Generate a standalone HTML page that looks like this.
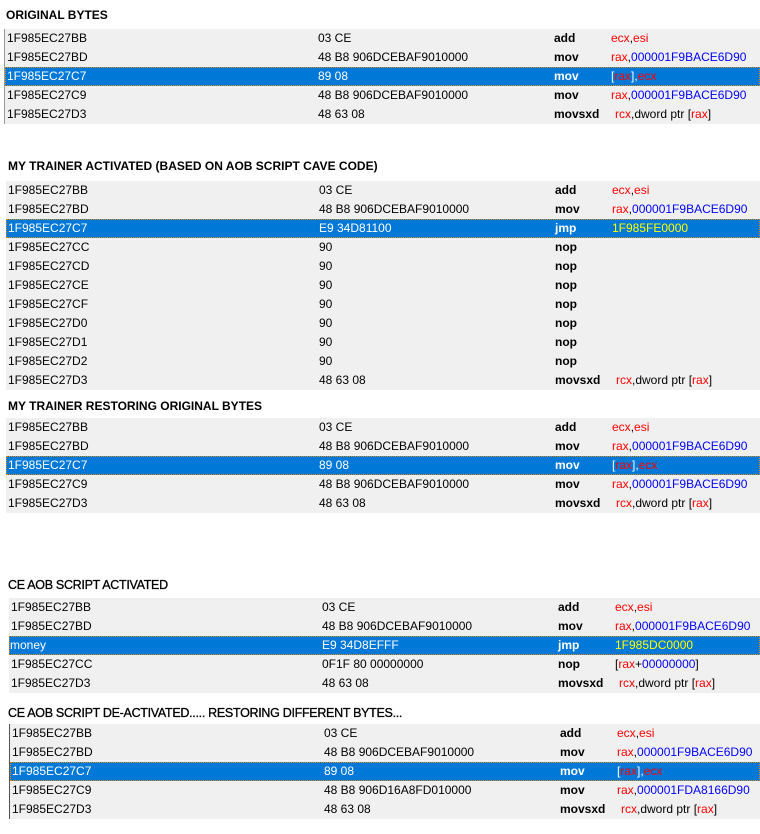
<!DOCTYPE html>
<html><head><meta charset="utf-8">
<style>
body{margin:0;width:760px;height:834px;background:#fff;position:relative;overflow:hidden;font-family:"Liberation Sans",sans-serif;font-size:12px;color:#000}
.t{position:absolute;font-weight:bold;font-size:12px;white-space:nowrap}
.b{position:absolute;right:0;background:#f0f0f0}
.r{height:19px;line-height:19px;position:relative;white-space:nowrap}
.r span.c{position:absolute;top:0}
.r .o{font-weight:bold}
.s{background:#0078d7;color:#fff;outline:1px dotted #e08a00;outline-offset:-1px}
.g{color:#f00}.h{color:#00f}.y{color:#ff0}
.s .p{color:#fff}
</style></head><body>

<div class="t" style="left:6px;top:8px">ORIGINAL BYTES</div>
<div class="b" style="left:4px;top:29px;border-left:1px solid #999">
<div class="r"><span class="c" style="left:2px">1F985EC27BB</span><span class="c" style="left:313px">03 CE</span><span class="c o" style="left:549px">add</span><span class="c" style="left:606px"><span class="g">ecx</span>,<span class="g">esi</span></span></div>
<div class="r"><span class="c" style="left:2px">1F985EC27BD</span><span class="c" style="left:313px">48 B8 906DCEBAF9010000</span><span class="c o" style="left:549px">mov</span><span class="c" style="left:606px"><span class="g">rax</span>,<span class="h">000001F9BACE6D90</span></span></div>
<div class="r s"><span class="c" style="left:2px">1F985EC27C7</span><span class="c" style="left:313px">89 08</span><span class="c o" style="left:549px">mov</span><span class="c" style="left:606px"><span class="p">[</span><span class="g">rax</span><span class="p">],</span><span class="g">ecx</span></span></div>
<div class="r"><span class="c" style="left:2px">1F985EC27C9</span><span class="c" style="left:313px">48 B8 906DCEBAF9010000</span><span class="c o" style="left:549px">mov</span><span class="c" style="left:606px"><span class="g">rax</span>,<span class="h">000001F9BACE6D90</span></span></div>
<div class="r"><span class="c" style="left:2px">1F985EC27D3</span><span class="c" style="left:313px">48 63 08</span><span class="c o" style="left:549px">movsxd</span><span class="c" style="left:610px"><span class="g">rcx</span>,dword ptr [<span class="g">rax</span>]</span></div>
</div>

<div class="t" style="left:8px;top:159px">MY TRAINER ACTIVATED (BASED ON AOB SCRIPT CAVE CODE)</div>
<div class="b" style="left:6px;top:181px">
<div class="r"><span class="c" style="left:2px">1F985EC27BB</span><span class="c" style="left:313px">03 CE</span><span class="c o" style="left:549px">add</span><span class="c" style="left:606px"><span class="g">ecx</span>,<span class="g">esi</span></span></div>
<div class="r"><span class="c" style="left:2px">1F985EC27BD</span><span class="c" style="left:313px">48 B8 906DCEBAF9010000</span><span class="c o" style="left:549px">mov</span><span class="c" style="left:606px"><span class="g">rax</span>,<span class="h">000001F9BACE6D90</span></span></div>
<div class="r s"><span class="c" style="left:2px">1F985EC27C7</span><span class="c" style="left:313px">E9 34D81100</span><span class="c o" style="left:549px">jmp</span><span class="c y" style="left:606px">1F985FE0000</span></div>
<div class="r"><span class="c" style="left:2px">1F985EC27CC</span><span class="c" style="left:313px">90</span><span class="c o" style="left:549px">nop</span></div>
<div class="r"><span class="c" style="left:2px">1F985EC27CD</span><span class="c" style="left:313px">90</span><span class="c o" style="left:549px">nop</span></div>
<div class="r"><span class="c" style="left:2px">1F985EC27CE</span><span class="c" style="left:313px">90</span><span class="c o" style="left:549px">nop</span></div>
<div class="r"><span class="c" style="left:2px">1F985EC27CF</span><span class="c" style="left:313px">90</span><span class="c o" style="left:549px">nop</span></div>
<div class="r"><span class="c" style="left:2px">1F985EC27D0</span><span class="c" style="left:313px">90</span><span class="c o" style="left:549px">nop</span></div>
<div class="r"><span class="c" style="left:2px">1F985EC27D1</span><span class="c" style="left:313px">90</span><span class="c o" style="left:549px">nop</span></div>
<div class="r"><span class="c" style="left:2px">1F985EC27D2</span><span class="c" style="left:313px">90</span><span class="c o" style="left:549px">nop</span></div>
<div class="r"><span class="c" style="left:2px">1F985EC27D3</span><span class="c" style="left:313px">48 63 08</span><span class="c o" style="left:549px">movsxd</span><span class="c" style="left:610px"><span class="g">rcx</span>,dword ptr [<span class="g">rax</span>]</span></div>
</div>

<div class="t" style="left:8px;top:399px">MY TRAINER RESTORING ORIGINAL BYTES</div>
<div class="b" style="left:6px;top:418px">
<div class="r"><span class="c" style="left:2px">1F985EC27BB</span><span class="c" style="left:313px">03 CE</span><span class="c o" style="left:549px">add</span><span class="c" style="left:606px"><span class="g">ecx</span>,<span class="g">esi</span></span></div>
<div class="r"><span class="c" style="left:2px">1F985EC27BD</span><span class="c" style="left:313px">48 B8 906DCEBAF9010000</span><span class="c o" style="left:549px">mov</span><span class="c" style="left:606px"><span class="g">rax</span>,<span class="h">000001F9BACE6D90</span></span></div>
<div class="r s"><span class="c" style="left:2px">1F985EC27C7</span><span class="c" style="left:313px">89 08</span><span class="c o" style="left:549px">mov</span><span class="c" style="left:606px"><span class="p">[</span><span class="g">rax</span><span class="p">],</span><span class="g">ecx</span></span></div>
<div class="r"><span class="c" style="left:2px">1F985EC27C9</span><span class="c" style="left:313px">48 B8 906DCEBAF9010000</span><span class="c o" style="left:549px">mov</span><span class="c" style="left:606px"><span class="g">rax</span>,<span class="h">000001F9BACE6D90</span></span></div>
<div class="r"><span class="c" style="left:2px">1F985EC27D3</span><span class="c" style="left:313px">48 63 08</span><span class="c o" style="left:549px">movsxd</span><span class="c" style="left:610px"><span class="g">rcx</span>,dword ptr [<span class="g">rax</span>]</span></div>
</div>

<div class="t" style="left:8px;top:578px;font-weight:normal;font-size:12.5px;letter-spacing:-0.3px;-webkit-text-stroke:0.3px #000">CE AOB SCRIPT ACTIVATED</div>
<div class="b" style="left:9px;top:598px">
<div class="r"><span class="c" style="left:2px">1F985EC27BB</span><span class="c" style="left:313px">03 CE</span><span class="c o" style="left:549px">add</span><span class="c" style="left:606px"><span class="g">ecx</span>,<span class="g">esi</span></span></div>
<div class="r"><span class="c" style="left:2px">1F985EC27BD</span><span class="c" style="left:313px">48 B8 906DCEBAF9010000</span><span class="c o" style="left:549px">mov</span><span class="c" style="left:606px"><span class="g">rax</span>,<span class="h">000001F9BACE6D90</span></span></div>
<div class="r s"><span class="c" style="left:1px">money</span><span class="c" style="left:313px">E9 34D8EFFF</span><span class="c o" style="left:549px">jmp</span><span class="c y" style="left:606px">1F985DC0000</span></div>
<div class="r"><span class="c" style="left:2px">1F985EC27CC</span><span class="c" style="left:313px">0F1F 80 00000000</span><span class="c o" style="left:549px">nop</span><span class="c" style="left:606px">[<span class="g">rax</span>+<span class="h">00000000</span>]</span></div>
<div class="r"><span class="c" style="left:2px">1F985EC27D3</span><span class="c" style="left:313px">48 63 08</span><span class="c o" style="left:549px">movsxd</span><span class="c" style="left:610px"><span class="g">rcx</span>,dword ptr [<span class="g">rax</span>]</span></div>
</div>

<div class="t" style="left:8px;top:706px;font-weight:normal;font-size:12.5px;letter-spacing:-0.3px;-webkit-text-stroke:0.3px #000">CE AOB SCRIPT DE-ACTIVATED..... RESTORING DIFFERENT BYTES...</div>
<div class="b" style="left:9px;top:724px;border-left:1px solid #555">
<div class="r"><span class="c" style="left:2px">1F985EC27BB</span><span class="c" style="left:314px">03 CE</span><span class="c o" style="left:550px">add</span><span class="c" style="left:607px"><span class="g">ecx</span>,<span class="g">esi</span></span></div>
<div class="r"><span class="c" style="left:2px">1F985EC27BD</span><span class="c" style="left:314px">48 B8 906DCEBAF9010000</span><span class="c o" style="left:550px">mov</span><span class="c" style="left:607px"><span class="g">rax</span>,<span class="h">000001F9BACE6D90</span></span></div>
<div class="r s"><span class="c" style="left:2px">1F985EC27C7</span><span class="c" style="left:314px">89 08</span><span class="c o" style="left:550px">mov</span><span class="c" style="left:607px"><span class="p">[</span><span class="g">rax</span><span class="p">],</span><span class="g">ecx</span></span></div>
<div class="r"><span class="c" style="left:2px">1F985EC27C9</span><span class="c" style="left:314px">48 B8 906D16A8FD010000</span><span class="c o" style="left:550px">mov</span><span class="c" style="left:607px"><span class="g">rax</span>,<span class="h">000001FDA8166D90</span></span></div>
<div class="r"><span class="c" style="left:2px">1F985EC27D3</span><span class="c" style="left:314px">48 63 08</span><span class="c o" style="left:550px">movsxd</span><span class="c" style="left:611px"><span class="g">rcx</span>,dword ptr [<span class="g">rax</span>]</span></div>
</div>

</body></html>
